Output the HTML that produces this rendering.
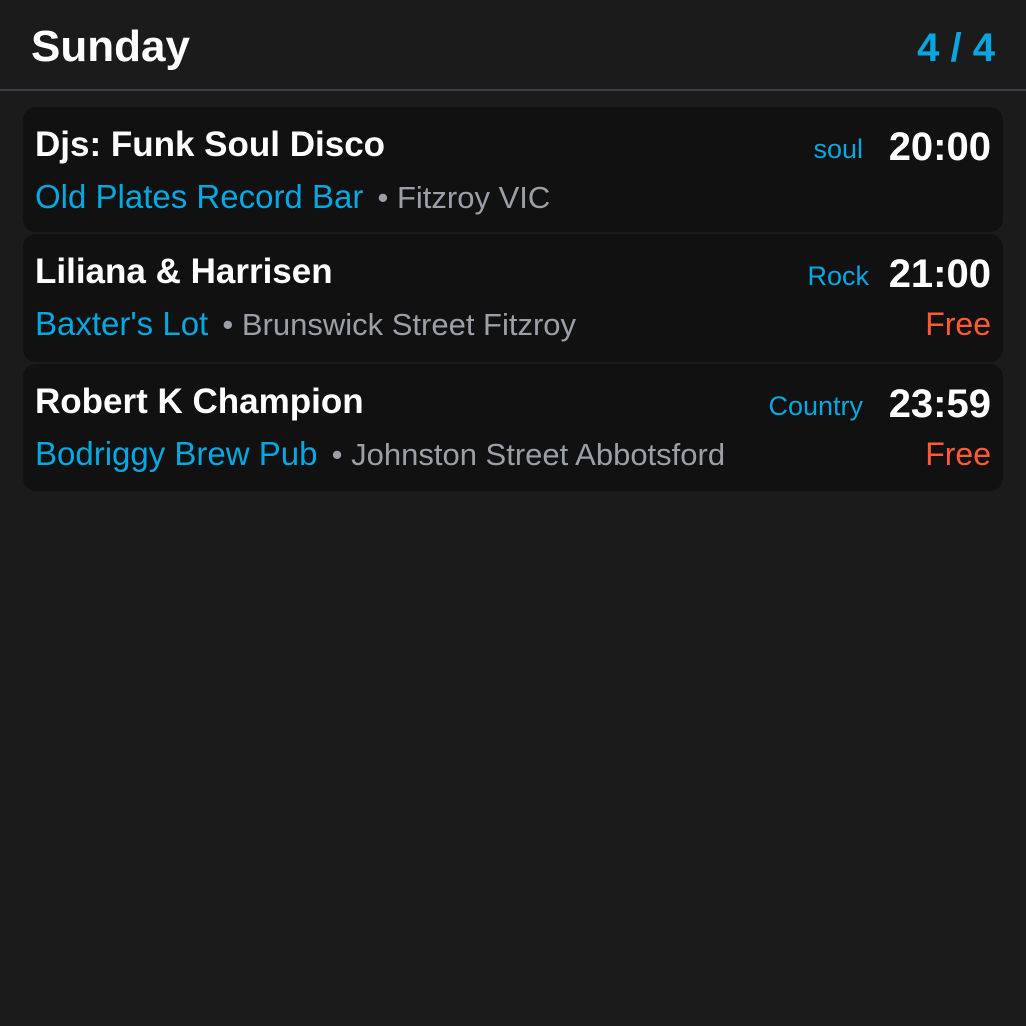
<!DOCTYPE html>
<html><head><style>
body{margin:0;width:1026px;height:1026px;background:#1b1b1b;font-family:"Liberation Sans",sans-serif;position:relative;overflow:hidden}
.a{position:absolute;white-space:nowrap;line-height:1}
.h{left:31px;top:25px;font-size:44px;font-weight:bold;color:#fff}
.c{position:absolute;right:31px;top:26px;font-size:40px;font-weight:bold;color:#08a6e0}
.line{position:absolute;left:0;right:0;top:89px;height:2px;background:#3a3f4a}
.card{position:absolute;left:23px;width:980px;background:#111;border-radius:13px}
.t{left:12px;top:20px;font-size:35px;font-weight:bold;color:#fff}
.s{left:12px;top:73px;font-size:33px;color:#05a8e0}
.s span{color:#9b9fa8;font-size:31px;margin-left:5px}
.g{font-size:27px;color:#05a8e0;top:29px}
.tm{right:12px;top:20px;font-size:40px;font-weight:bold;color:#fff}
.f{right:12px;top:74px;font-size:32px;color:#ff5a36}
</style></head><body>
<div class="a h">Sunday</div>
<div class="c">4 / 4</div>
<div class="line"></div>
<div class="card" style="top:107px;height:125px">
<div class="a t">Djs: Funk Soul Disco</div>
<div class="a s">Old Plates Record Bar <span>• Fitzroy VIC</span></div>
<div class="a g" style="right:140px">soul</div>
<div class="a tm">20:00</div>
</div>
<div class="card" style="top:234px;height:128px">
<div class="a t">Liliana &amp; Harrisen</div>
<div class="a s">Baxter's Lot <span>• Brunswick Street Fitzroy</span></div>
<div class="a g" style="right:134px">Rock</div>
<div class="a tm">21:00</div>
<div class="a f">Free</div>
</div>
<div class="card" style="top:364px;height:127px">
<div class="a t">Robert K Champion</div>
<div class="a s">Bodriggy Brew Pub <span>• Johnston Street Abbotsford</span></div>
<div class="a g" style="right:140px">Country</div>
<div class="a tm">23:59</div>
<div class="a f">Free</div>
</div>
</body></html>
